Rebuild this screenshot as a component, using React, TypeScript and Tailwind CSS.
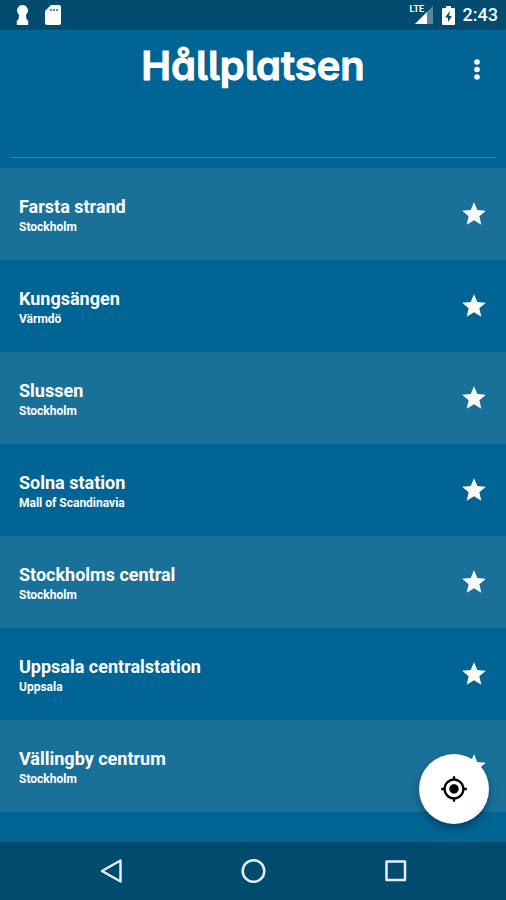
import React, { useState } from "react";

interface Stop {
    name: string;
    area: string;
}

const stops: Stop[] = [
    { name: "Farsta strand", area: "Stockholm" },
    { name: "Kungsängen", area: "Värmdö" },
    { name: "Slussen", area: "Stockholm" },
    { name: "Solna station", area: "Mall of Scandinavia" },
    { name: "Stockholms central", area: "Stockholm" },
    { name: "Uppsala centralstation", area: "Uppsala" },
    { name: "Vällingby centrum", area: "Stockholm" },
];

const StatusBar: React.FC = () => (
    <div className="flex h-[30px] shrink-0 items-center justify-between bg-[#004b6e] pl-4 pr-2 text-white">
        <div className="flex items-center gap-4">
            {/* Keyhole */}
            <svg width="13" height="20" viewBox="0 0 13 20" fill="currentColor">
                <path d="M6.5 0a5.500 5.500 0 0 1 4 9.200c-.6.7-.7 1.300-.5 2L10.800 15l1.400.5V20H.8v-4.500L2.200 15 3 11.200c.2-.7.1-1.300-.5-2A5.500 5.500 0 0 1 6.500 0z" />
            </svg>
            {/* SD card */}
            <svg width="16" height="20" viewBox="0 0 16 20">
                <path fill="currentColor" d="M6 0h8a2 2 0 0 1 2 2v16a2 2 0 0 1-2 2H2a2 2 0 0 1-2-2V6z" />
                <path fill="#5b87a0" d="M5 4h2v2H5zM8 4h2v2H8zM11 4h2v2h-2z" />
            </svg>
        </div>
        <div className="flex items-center gap-2">
            <div className="relative">
                <svg width="24" height="20" viewBox="0 0 24 20" fill="currentColor">
                    <path fillOpacity="0.35" d="M23 1v18H5z" />
                    <path d="M17 7v12H5z" />
                </svg>
                <span className="absolute left-0 top-0 text-[9px] font-bold leading-[9px]">LTE</span>
            </div>
            {/* Charging battery */}
            <svg width="13" height="19" viewBox="0 0 13 19">
                <path fill="currentColor" d="M4 0h5v2h3a1 1 0 0 1 1 1v15a1 1 0 0 1-1 1H1a1 1 0 0 1-1-1V3a1 1 0 0 1 1-1h3z" />
                <path fill="#004b6e" d="M8 5l-5 6.500h3V16l4-6H7z" />
            </svg>
            <span className="text-lg font-medium">2:43</span>
        </div>
    </div>
);

const StopRow: React.FC<{ stop: Stop }> = ({ stop }) => {
    const [starred, setStarred] = useState(true);

    return (
        <li className="flex h-[92px] items-center justify-between px-[19px] odd:bg-[#19719a]">
            <div className="pt-0.5 font-bold">
                <h2 className="text-lg leading-6">{stop.name}</h2>
                <p className="text-xs leading-4">{stop.area}</p>
            </div>
            <button aria-label={`Favorit ${stop.name}`} aria-pressed={starred} onClick={() => setStarred(!starred)}>
                <svg
                    width="26"
                    height="26"
                    viewBox="1 1 22 22"
                    fill={starred ? "currentColor" : "none"}
                    stroke={starred ? "none" : "currentColor"}
                >
                    <path d="M12 17.270L18.180 21l-1.640-7.030L22 9.240l-7.190-.61L12 2 9.190 8.630 2 9.240l5.460 4.730L5.820 21z" />
                </svg>
            </button>
        </li>
    );
};

const App: React.FC = () => {
    const [query, setQuery] = useState("");
    const visible = stops.filter((s) => s.name.toLowerCase().includes(query.toLowerCase()));

    return (
        <div className="flex min-h-screen flex-col bg-[#006494] font-[Roboto,sans-serif] text-white">
            <StatusBar />

            <header className="grid h-20 grid-cols-[1fr_auto_1fr] items-center px-[11px]">
                {/* Rounded wordmark: single-storey a and tailed l */}
                <h1 className="col-start-2 pb-2 font-[Inter,sans-serif] text-[40px] font-semibold leading-none [font-feature-settings:'cv11','cv05','ss03'] [-webkit-text-stroke:1px_white]">
                    Hållplatsen
                </h1>
                <button className="flex h-10 w-9 items-center justify-center justify-self-end" aria-label="Meny">
                    <svg width="8" height="24" viewBox="0 0 8 24" fill="currentColor">
                        <circle cx="4" cy="4" r="2.8" />
                        <circle cx="4" cy="11.5" r="2.8" />
                        <circle cx="4" cy="19" r="2.8" />
                    </svg>
                </button>
            </header>

            <div className="px-[11px] pb-[10px]">
                <input
                    className="block h-12 w-full border-b border-[#3389af] bg-transparent text-lg outline-none"
                    type="text"
                    aria-label="Sök hållplats"
                    value={query}
                    onChange={(e) => setQuery(e.target.value)}
                />
            </div>

            <main className="relative flex-1">
                <ul>
                    {visible.map((stop) => (
                        <StopRow key={stop.name} stop={stop} />
                    ))}
                </ul>
                {/* Find stops near me */}
                <button
                    className="absolute bottom-[18px] right-[17px] flex size-[70px] items-center justify-center rounded-full bg-white text-black shadow-[0_4px_8px_rgba(0,0,0,0.35)]"
                    aria-label="Min position"
                >
                    <svg width="28" height="28" viewBox="0 0 24 24" fill="currentColor">
                        <path d="M12 8c-2.210 0-4 1.790-4 4s1.790 4 4 4 4-1.790 4-4-1.790-4-4-4zm8.940 3c-.46-4.170-3.770-7.480-7.940-7.940V1h-2v2.060C6.830 3.520 3.520 6.830 3.060 11H1v2h2.060c.46 4.170 3.770 7.480 7.940 7.940V23h2v-2.060c4.170-.46 7.480-3.770 7.940-7.940H23v-2h-2.060zM12 19c-3.870 0-7-3.130-7-7s3.130-7 7-7 7 3.130 7 7-3.130 7-7 7z" />
                    </svg>
                </button>
            </main>

            <nav className="grid h-[58px] shrink-0 grid-cols-3 bg-[#004b6e] px-10">
                <button className="flex items-center justify-center" aria-label="Tillbaka">
                    <svg width="24" height="26" viewBox="0 0 24 26" fill="none" stroke="#e3eef8" strokeWidth="2.5" strokeLinejoin="round">
                        <path d="M21.5 2.500v21L3 13z" />
                    </svg>
                </button>
                <button className="flex items-center justify-center" aria-label="Hem">
                    <svg width="26" height="26" viewBox="0 0 26 26" fill="none" stroke="#e3eef8" strokeWidth="2.5">
                        <circle cx="13.5" cy="13" r="10.8" />
                    </svg>
                </button>
                <button className="flex items-center justify-center" aria-label="Senaste">
                    <svg width="24" height="24" viewBox="0 0 24 24" fill="none" stroke="#e3eef8" strokeWidth="2.5" strokeLinejoin="round">
                        <rect x="3.5" y="2.5" width="18.5" height="18.5" />
                    </svg>
                </button>
            </nav>
        </div>
    );
};

export default App;
